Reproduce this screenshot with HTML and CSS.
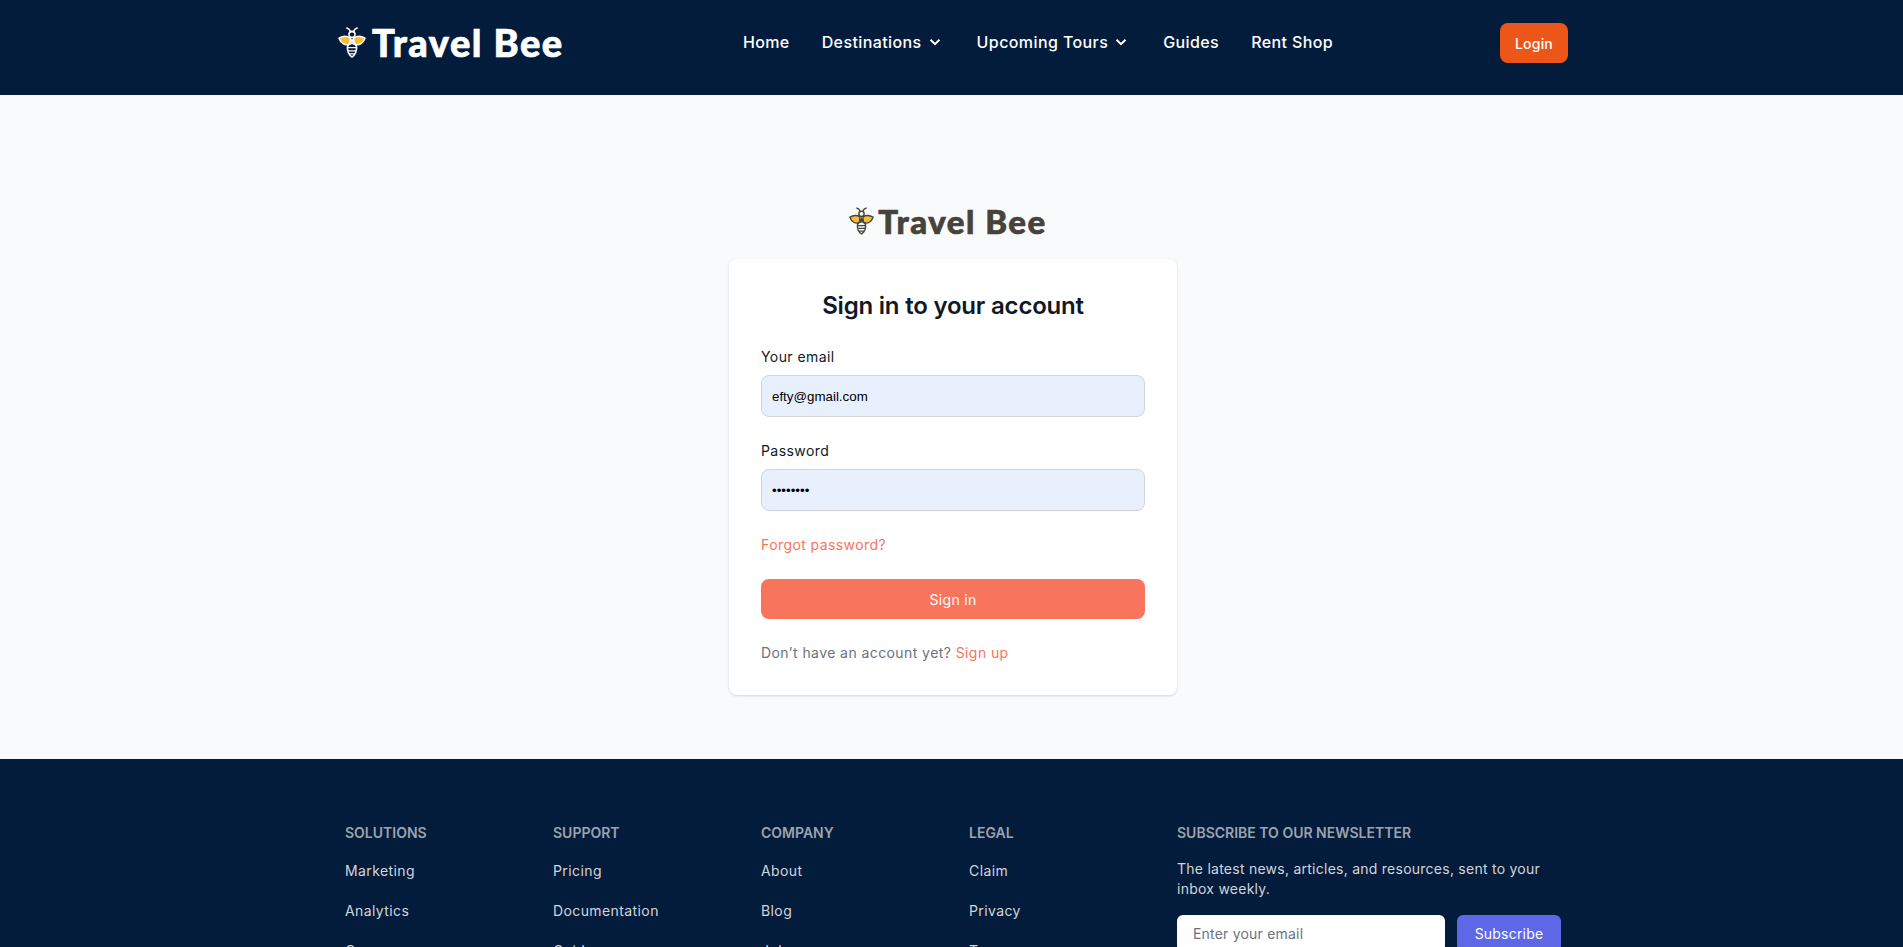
FILE: index.html
```html
<!DOCTYPE html>
<html lang="en">

<head>
    <meta charset="UTF-8">
    <meta name="viewport" content="width=device-width, initial-scale=1.0">
    <title>Travel Bee</title>
    <link rel="stylesheet" href="styles.css">
</head>

<body>

    <svg class="svgDefs" width="0" height="0" aria-hidden="true">
        <symbol id="bee" viewBox="0 0 28 31">
            <path d="M12.800 5 11 2.200 8.800 1M15.200 5l1.800-2.800L19.200 1" fill="none" stroke="currentColor" stroke-width="1.500" stroke-linecap="round"/>
            <circle cx="14" cy="7.400" r="3" fill="none" stroke="currentColor" stroke-width="1.600"/>
            <path d="M1 11.200C5 8.800 9.500 9.200 12.400 10.800L11.800 17.200C7 19 2.800 16.500 1 11.200Z" fill="#fdbb30" stroke="currentColor" stroke-width="1.500" stroke-linejoin="round"/>
            <path d="M27 11.200C23 8.800 18.500 9.200 15.600 10.800L16.200 17.200C21 19 25.200 16.500 27 11.200Z" fill="#fdbb30" stroke="currentColor" stroke-width="1.500" stroke-linejoin="round"/>
            <path d="M14 11 16.800 15.800H11.200Z" fill="currentColor"/>
            <path d="M14 30C11 28.500 9.300 24 9.400 20.500 9.500 18 11.500 16.400 14 16.400S18.500 18 18.600 20.500C18.700 24 17 28.500 14 30Z" fill="none" stroke="currentColor" stroke-width="1.600" stroke-linejoin="round"/>
            <path d="M9.600 20.600H18.400M10 23.800H18M11.200 26.800H16.800" fill="none" stroke="currentColor" stroke-width="1.300"/>
        </symbol>
    </svg>

    <header class="siteHeader">
        <div class="headerInner">
            <a class="logo logoHeader" href="#">
                <svg class="logoBee"><use href="#bee"/></svg>
                <span>Travel Bee</span>
            </a>
            <nav class="mainNav">
                <a href="#">Home</a>
                <a class="hasMenu" href="#">Destinations
                    <svg class="chevron" viewBox="0 0 20 20"><path d="M5.500 7.800 10 12.200l4.500-4.400" fill="none" stroke="currentColor" stroke-width="2"/></svg>
                </a>
                <a class="hasMenu" href="#">Upcoming Tours
                    <svg class="chevron" viewBox="0 0 20 20"><path d="M5.500 7.800 10 12.200l4.500-4.400" fill="none" stroke="currentColor" stroke-width="2"/></svg>
                </a>
                <a href="#">Guides</a>
                <a href="#">Rent Shop</a>
            </nav>
            <a class="loginBtn" href="#">Login</a>
        </div>
    </header>

    <main class="signinSection">
        <a class="logo logoForm" href="#">
            <svg class="logoBee"><use href="#bee"/></svg>
            <span>Travel Bee</span>
        </a>
        <div class="card">
            <h1>Sign in to your account</h1>
            <form class="signinForm">
                <div class="field">
                    <label for="email">Your email</label>
                    <input type="email" id="email" value="efty@gmail.com">
                </div>
                <div class="field">
                    <label for="password">Password</label>
                    <input type="password" id="password" value="12345678">
                </div>
                <a class="accent forgot" href="#">Forgot password?</a>
                <button class="signinBtn" type="button">Sign in</button>
                <p class="signupLine">Don’t have an account yet? <a class="accent" href="#">Sign up</a></p>
            </form>
        </div>
    </main>

    <footer class="siteFooter">
        <div class="footerGrid">
            <div class="footerCol">
                <h3>Solutions</h3>
                <a href="#">Marketing</a>
                <a href="#">Analytics</a>
                <a href="#">Commerce</a>
                <a href="#">Insights</a>
            </div>
            <div class="footerCol">
                <h3>Support</h3>
                <a href="#">Pricing</a>
                <a href="#">Documentation</a>
                <a href="#">Guides</a>
                <a href="#">API Status</a>
            </div>
            <div class="footerCol">
                <h3>Company</h3>
                <a href="#">About</a>
                <a href="#">Blog</a>
                <a href="#">Jobs</a>
                <a href="#">Press</a>
            </div>
            <div class="footerCol">
                <h3>Legal</h3>
                <a href="#">Claim</a>
                <a href="#">Privacy</a>
                <a href="#">Terms</a>
            </div>
            <div class="newsletter">
                <h3>Subscribe to our newsletter</h3>
                <p>The latest news, articles, and resources, sent to your inbox weekly.</p>
                <form class="subscribeForm">
                    <input type="email" placeholder="Enter your email">
                    <button type="button">Subscribe</button>
                </form>
            </div>
        </div>
    </footer>

</body>

</html>
```

FILE: styles.css
```css
* {
    box-sizing: border-box;
}

body {
    font-family: Inter, "Noto Sans", sans-serif;
    margin: 0;
    padding: 0;
    background-color: #f9fafb;
}

a {
    text-decoration: none;
    color: inherit;
}

.svgDefs {
    position: absolute;
}

/* header */
.siteHeader {
    height: 95px;
    padding: 0 0 9px 1px;
    background-color: #041c3c;
    color: white;
}

.headerInner {
    width: 1232px;
    height: 100%;
    margin: 0 auto;
    display: flex;
    align-items: center;
    justify-content: space-between;
}

.logo {
    display: flex;
    align-items: center;
    font-family: Lato, sans-serif;
    font-weight: 900;
    -webkit-text-stroke: 0.7px currentColor;
}

.logoHeader {
    width: 240px;
    padding-left: 2px;
    gap: 6px;
    font-size: 38px;
    letter-spacing: 1.5px;
    margin-top: -2px;
}

.logoHeader .logoBee {
    width: 28px;
    height: 31px;
}

.mainNav {
    display: flex;
    align-items: center;
    gap: 32px;
    font-size: 16px;
    font-weight: 500;
    letter-spacing: 0.4px;
    margin-top: -2px;
}

.hasMenu {
    display: flex;
    align-items: center;
    gap: 3px;
}

.chevron {
    width: 20px;
    height: 20px;
}

.loginBtn {
    width: 68px;
    height: 40px;
    display: flex;
    align-items: center;
    justify-content: center;
    background-color: #ec5618;
    border-radius: 8px;
    font-size: 14px;
    font-weight: 500;
    letter-spacing: 0.2px;
}

/* sign in */
.signinSection {
    height: 664px;
    padding: 107px 0 0 3px;
    display: flex;
    flex-direction: column;
    align-items: center;
}

.logoForm {
    height: 38px;
    margin-bottom: 19px;
    margin-right: 10px;
    gap: 4px;
    font-size: 33px;
    letter-spacing: 1.500px;
    color: #46443a;
}

.logoForm .logoBee {
    width: 25px;
    height: 28px;
}

.card {
    width: 448px;
    height: 436px;
    padding: 32px;
    background-color: white;
    border-radius: 8px;
    box-shadow: 0 1px 3px rgba(0, 0, 0, 0.1), 0 1px 2px rgba(0, 0, 0, 0.06);
}

.card h1 {
    margin: 0 0 26px;
    font-size: 24px;
    font-weight: 600;
    line-height: 30px;
    text-align: center;
    color: #111827;
    letter-spacing: -0.2px;
}

.signinForm {
    display: flex;
    flex-direction: column;
    font-size: 14px;
    letter-spacing: 0.42px;
}

.field {
    margin-bottom: 24px;
}

.field label {
    display: block;
    margin-bottom: 8px;
    line-height: 20px;
    color: #111827;
}

.field input {
    display: block;
    width: 100%;
    height: 42px;
    padding: 0 10px;
    background-color: #e8f0fe;
    border: 1px solid #d1d5db;
    border-radius: 8px;
    font-family: "Liberation Sans", Arial, sans-serif;
    font-size: 13.333px;
    color: black;
}

.accent {
    color: #f8745c;
}

.forgot {
    line-height: 20px;
}

.signinBtn {
    height: 40px;
    margin-top: 24px;
    background-color: #f8745c;
    border: none;
    border-radius: 8px;
    font-family: inherit;
    font-size: 14px;
    letter-spacing: 0.3px;
    color: white;
}

.signupLine {
    margin: 24px 0 0;
    line-height: 20px;
    color: #6b7280;
}

/* footer */
.siteFooter {
    background-color: #041c3c;
    padding: 64px 0 48px 3px;
}

.footerGrid {
    width: 1216px;
    margin: 0 auto;
    display: grid;
    grid-template-columns: repeat(4, 208px) 1fr;
}

.footerCol a {
    display: block;
    margin-bottom: 20px;
    font-size: 14px;
    line-height: 20px;
    letter-spacing: 0.4px;
    color: #d1d5db;
}

.siteFooter h3 {
    margin: 0;
    font-size: 14px;
    font-weight: 600;
    line-height: 20px;
    text-transform: uppercase;
    color: #9ca3af;
}

.footerCol h3 {
    margin-bottom: 18px;
}

.newsletter p {
    margin: 16px 0;
    font-size: 14px;
    line-height: 20px;
    letter-spacing: 0.25px;
    color: #d1d5db;
}

.subscribeForm {
    display: flex;
    gap: 12px;
}

.subscribeForm input {
    width: 268px;
    height: 37px;
    padding: 0 16px;
    background-color: white;
    border: none;
    border-radius: 6px;
    font-family: inherit;
    font-size: 14px;
    letter-spacing: 0.2px;
}

.subscribeForm input::placeholder {
    color: #6b7280;
}

.subscribeForm button {
    width: 104px;
    height: 37px;
    background-color: #5e67e6;
    border: none;
    border-radius: 6px;
    font-family: inherit;
    font-size: 14px;
    letter-spacing: 0.2px;
    color: white;
}
```
